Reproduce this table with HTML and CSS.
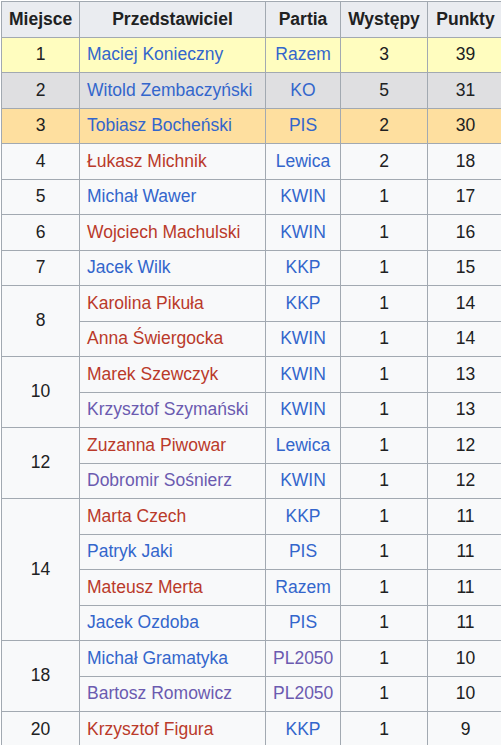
FILE: index.html
```html
<!DOCTYPE html>
<html lang="pl">

<head>
  <meta charset="UTF-8">
  <meta name="viewport" content="width=device-width, initial-scale=1.0">
  <title>Ranking</title>
  <link rel="stylesheet" href="styles.css">
</head>

<body>
  <table class="wikitable">
    <colgroup>
      <col class="col-place">
      <col class="col-name">
      <col class="col-party">
      <col class="col-apps">
      <col class="col-points">
    </colgroup>
    <thead>
      <tr>
        <th>Miejsce</th>
        <th>Przedstawiciel</th>
        <th>Partia</th>
        <th>Występy</th>
        <th>Punkty</th>
      </tr>
    </thead>
    <tbody>
      <tr class="gold">
        <td>1</td>
        <td class="name"><a href="#">Maciej Konieczny</a></td>
        <td><a href="#">Razem</a></td>
        <td>3</td>
        <td>39</td>
      </tr>
      <tr class="silver">
        <td>2</td>
        <td class="name"><a href="#">Witold Zembaczyński</a></td>
        <td><a href="#">KO</a></td>
        <td>5</td>
        <td>31</td>
      </tr>
      <tr class="bronze">
        <td>3</td>
        <td class="name"><a href="#">Tobiasz Bocheński</a></td>
        <td><a href="#">PIS</a></td>
        <td>2</td>
        <td>30</td>
      </tr>
      <tr>
        <td>4</td>
        <td class="name"><a class="new" href="#">Łukasz Michnik</a></td>
        <td><a href="#">Lewica</a></td>
        <td>2</td>
        <td>18</td>
      </tr>
      <tr>
        <td>5</td>
        <td class="name"><a href="#">Michał Wawer</a></td>
        <td><a href="#">KWIN</a></td>
        <td>1</td>
        <td>17</td>
      </tr>
      <tr>
        <td>6</td>
        <td class="name"><a class="new" href="#">Wojciech Machulski</a></td>
        <td><a href="#">KWIN</a></td>
        <td>1</td>
        <td>16</td>
      </tr>
      <tr>
        <td>7</td>
        <td class="name"><a href="#">Jacek Wilk</a></td>
        <td><a href="#">KKP</a></td>
        <td>1</td>
        <td>15</td>
      </tr>
      <tr>
        <td rowspan="2">8</td>
        <td class="name"><a class="new" href="#">Karolina Pikuła</a></td>
        <td><a href="#">KKP</a></td>
        <td>1</td>
        <td>14</td>
      </tr>
      <tr>
        <td class="name"><a class="new" href="#">Anna Świergocka</a></td>
        <td><a href="#">KWIN</a></td>
        <td>1</td>
        <td>14</td>
      </tr>
      <tr>
        <td rowspan="2">10</td>
        <td class="name"><a class="new" href="#">Marek Szewczyk</a></td>
        <td><a href="#">KWIN</a></td>
        <td>1</td>
        <td>13</td>
      </tr>
      <tr>
        <td class="name"><a class="visited" href="#">Krzysztof Szymański</a></td>
        <td><a href="#">KWIN</a></td>
        <td>1</td>
        <td>13</td>
      </tr>
      <tr>
        <td rowspan="2">12</td>
        <td class="name"><a class="new" href="#">Zuzanna Piwowar</a></td>
        <td><a href="#">Lewica</a></td>
        <td>1</td>
        <td>12</td>
      </tr>
      <tr>
        <td class="name"><a class="visited" href="#">Dobromir Sośnierz</a></td>
        <td><a href="#">KWIN</a></td>
        <td>1</td>
        <td>12</td>
      </tr>
      <tr>
        <td rowspan="4">14</td>
        <td class="name"><a class="new" href="#">Marta Czech</a></td>
        <td><a href="#">KKP</a></td>
        <td>1</td>
        <td>11</td>
      </tr>
      <tr>
        <td class="name"><a href="#">Patryk Jaki</a></td>
        <td><a href="#">PIS</a></td>
        <td>1</td>
        <td>11</td>
      </tr>
      <tr>
        <td class="name"><a class="new" href="#">Mateusz Merta</a></td>
        <td><a href="#">Razem</a></td>
        <td>1</td>
        <td>11</td>
      </tr>
      <tr>
        <td class="name"><a href="#">Jacek Ozdoba</a></td>
        <td><a href="#">PIS</a></td>
        <td>1</td>
        <td>11</td>
      </tr>
      <tr>
        <td rowspan="2">18</td>
        <td class="name"><a href="#">Michał Gramatyka</a></td>
        <td><a class="visited" href="#">PL2050</a></td>
        <td>1</td>
        <td>10</td>
      </tr>
      <tr>
        <td class="name"><a class="visited" href="#">Bartosz Romowicz</a></td>
        <td><a class="visited" href="#">PL2050</a></td>
        <td>1</td>
        <td>10</td>
      </tr>
      <tr>
        <td>20</td>
        <td class="name"><a class="new" href="#">Krzysztof Figura</a></td>
        <td><a href="#">KKP</a></td>
        <td>1</td>
        <td>9</td>
      </tr>
    </tbody>
  </table>
</body>

</html>
```

FILE: styles.css
```css
* {
  box-sizing: border-box;
}

body {
  margin: 0;
  padding: 1px 0 0 1px;
  background-color: #fff;
  font-family: 'Liberation Sans', Arial, sans-serif;
  font-size: 17.5px;
  color: #202122;
}

.wikitable {
  border-collapse: collapse;
  table-layout: fixed;
  width: 502px;
  background-color: #f8f9fa;
  border: 1px solid #a2a9b1;
  line-height: 27.5px;
}

.col-place {
  width: 78px;
}

.col-name {
  width: 186px;
}

.col-party {
  width: 75px;
}

.col-apps {
  width: 87px;
}

.col-points {
  width: 76px;
}

.wikitable th,
.wikitable td {
  border: 1px solid #a2a9b1;
  padding: 3.5px 7px;
  text-align: center;
  vertical-align: middle;
  white-space: nowrap;
}

.wikitable th {
  background-color: #eaecf0;
  font-weight: bold;
}

.wikitable td.name {
  text-align: left;
}

.gold td {
  background-color: #fffdbf;
}

.silver td {
  background-color: #dfdfe1;
}

.bronze td {
  background-color: #fedf9f;
}

a {
  color: #3366cc;
  text-decoration: none;
}

a.new {
  color: #ba3a2a;
}

a.visited {
  color: #6b5bb0;
}
```
